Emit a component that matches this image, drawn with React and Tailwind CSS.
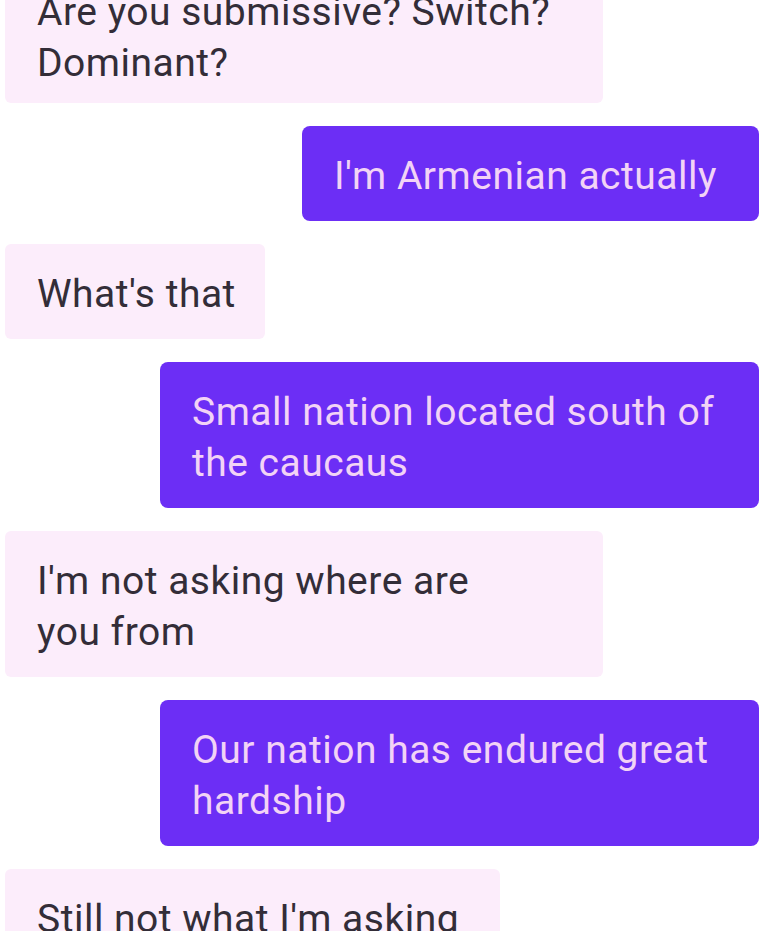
import React from 'react';

const messages = [
  { from: 'them', lines: ['Are you submissive? Switch?', 'Dominant?'], w: 'w-[598px]', pad: 'pt-[30px] pb-[14px]' },
  { from: 'me', lines: ["I'm Armenian actually"], w: 'w-[457px]' },
  { from: 'them', lines: ["What's that"], w: 'w-[260px]' },
  { from: 'me', lines: ['Small nation located south of', 'the caucaus'], w: 'w-[599px]' },
  { from: 'them', lines: ["I'm not asking where are", 'you from'], w: 'w-[598px]' },
  { from: 'me', lines: ['Our nation has endured great', 'hardship'], w: 'w-[599px]' },
  { from: 'them', lines: ["Still not what I'm asking"], w: 'w-[495px]' },
];

const Bubble = ({ msg }) => {
  const mine = msg.from === 'me';
  const pad = msg.pad || 'pt-[25px] pb-[19px]';
  return (
    <div
      className={
        mine
          ? `${msg.w} ${pad} self-end mr-[4px] rounded-lg bg-[#6c2ef5] text-[#f2d3f6] px-[32px]`
          : `${msg.w} ${pad} self-start ml-[5px] rounded-md bg-[#fcedfb] text-[#332d38] px-[32px]`
      }
    >
      {msg.lines.map((l, i) => (
        <div key={i} className="whitespace-nowrap">{l}</div>
      ))}
    </div>
  );
};

export default function App() {
  return (
    <div className="h-[931px] w-[763px] overflow-hidden bg-white font-['Roboto',sans-serif] text-[39px] leading-[51px] tracking-[0.5px]">
      <div className="mt-[-43px] flex flex-col gap-[23px]">
        {messages.map((m, i) => (
          <Bubble key={i} msg={m} />
        ))}
      </div>
    </div>
  );
}
